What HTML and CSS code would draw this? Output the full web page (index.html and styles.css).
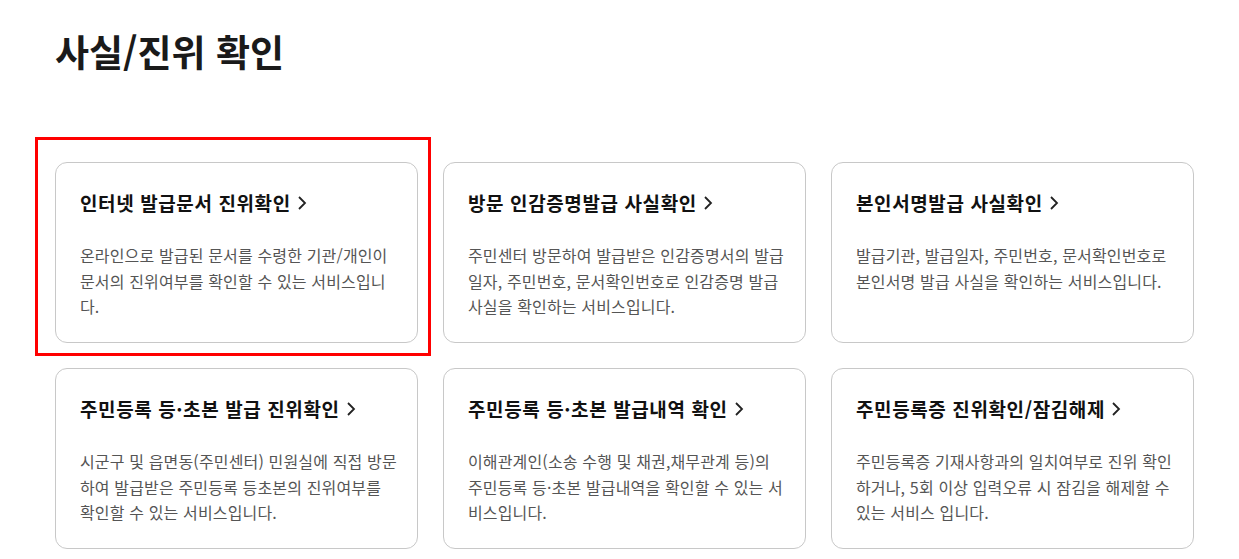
FILE: index.html
```html
<!DOCTYPE html>
<html lang="ko">
<head>
<meta charset="utf-8">
<title>사실/진위 확인</title>
<link rel="stylesheet" href="styles.css">
</head>
<body>
<main class="page">
  <h1 class="page-title">사실/진위 확인</h1>
  <div class="card-grid">
    <a class="card card-focused" href="#">
      <span class="focus-ring"></span>
      <h2 class="card-title">인터넷 발급문서 진위확인 <svg class="chev" width="10" height="16" viewBox="0 0 10 16"><path d="M2 2 L8 8 L2 14" fill="none" stroke="#222" stroke-width="1.8"/></svg></h2>
      <p class="card-desc">온라인으로 발급된 문서를 수령한 기관/개인이 문서의 진위여부를 확인할 수 있는 서비스입니다.</p>
    </a>
    <a class="card" href="#">
      <h2 class="card-title">방문 인감증명발급 사실확인 <svg class="chev" width="10" height="16" viewBox="0 0 10 16"><path d="M2 2 L8 8 L2 14" fill="none" stroke="#222" stroke-width="1.8"/></svg></h2>
      <p class="card-desc">주민센터 방문하여 발급받은 인감증명서의 발급일자, 주민번호, 문서확인번호로 인감증명 발급 사실을 확인하는 서비스입니다.</p>
    </a>
    <a class="card" href="#">
      <h2 class="card-title">본인서명발급 사실확인 <svg class="chev" width="10" height="16" viewBox="0 0 10 16"><path d="M2 2 L8 8 L2 14" fill="none" stroke="#222" stroke-width="1.8"/></svg></h2>
      <p class="card-desc">발급기관, 발급일자, 주민번호, 문서확인번호로 본인서명 발급 사실을 확인하는 서비스입니다.</p>
    </a>
    <a class="card" href="#">
      <h2 class="card-title">주민등록 등·초본 발급 진위확인 <svg class="chev" width="10" height="16" viewBox="0 0 10 16"><path d="M2 2 L8 8 L2 14" fill="none" stroke="#222" stroke-width="1.8"/></svg></h2>
      <p class="card-desc">시군구 및 읍면동(주민센터) 민원실에 직접 방문하여 발급받은 주민등록 등초본의 진위여부를 확인할 수 있는 서비스입니다.</p>
    </a>
    <a class="card" href="#">
      <h2 class="card-title">주민등록 등·초본 발급내역 확인 <svg class="chev" width="10" height="16" viewBox="0 0 10 16"><path d="M2 2 L8 8 L2 14" fill="none" stroke="#222" stroke-width="1.8"/></svg></h2>
      <p class="card-desc">이해관계인(소송 수행 및 채권,채무관계 등)의 주민등록 등·초본 발급내역을 확인할 수 있는 서비스입니다.</p>
    </a>
    <a class="card" href="#">
      <h2 class="card-title">주민등록증 진위확인/잠김해제 <svg class="chev" width="10" height="16" viewBox="0 0 10 16"><path d="M2 2 L8 8 L2 14" fill="none" stroke="#222" stroke-width="1.8"/></svg></h2>
      <p class="card-desc">주민등록증 기재사항과의 일치여부로 진위 확인하거나, 5회 이상 입력오류 시 잠김을 해제할 수 있는 서비스 입니다.</p>
    </a>
  </div>
</main>
</body>
</html>
```

FILE: styles.css
```css
* { box-sizing: border-box; }
html, body {
  margin: 0;
  padding: 0;
  background: #fff;
  font-family: "Noto Sans CJK KR", "Noto Sans", sans-serif;
  color: #111;
}
.page {
  width: 1139px;
  margin-left: 55px;
  padding-top: 28px;
}
.page-title {
  margin: 0;
  font-size: 37px;
  font-weight: 700;
  line-height: 46px;
  letter-spacing: 0;
  color: #1a1a1a;
}
.card-grid {
  margin-top: 88px;
  display: grid;
  grid-template-columns: repeat(3, 363px);
  gap: 25px;
}
.card {
  position: relative;
  display: block;
  height: 181px;
  border: 1px solid #c8c8c8;
  border-radius: 12px;
  padding: 26px 19px 20px 24px;
  text-decoration: none;
  color: inherit;
  background: #fff;
}
.focus-ring {
  position: absolute;
  left: -21px;
  top: -26px;
  right: -14px;
  bottom: -14px;
  border: 3px solid #ff0000;
  pointer-events: none;
}
.card-title {
  margin: 0;
  font-size: 19px;
  font-weight: 700;
  line-height: 27px;
  letter-spacing: 0.6px;
  color: #111;
  display: flex;
  align-items: center;
  gap: 6px;
}
.chev { display: block; flex: none; }
.card-desc {
  margin: 27px 0 0 0;
  font-size: 16px;
  line-height: 25.5px;
  letter-spacing: 0.15px;
  color: #555;
}
```
